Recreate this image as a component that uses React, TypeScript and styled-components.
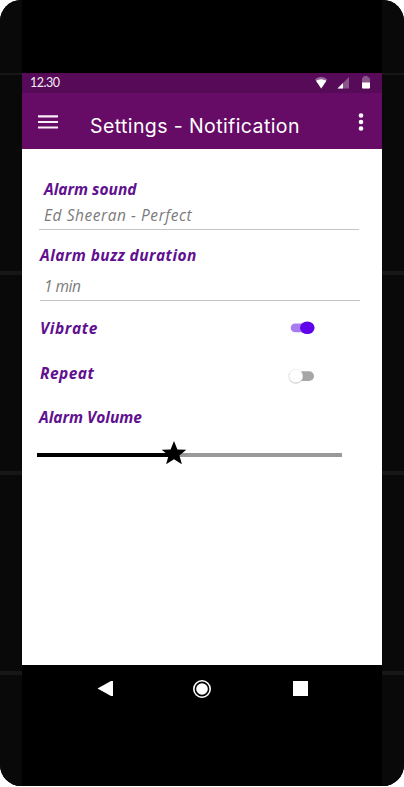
import React from "react";
import styled, { createGlobalStyle } from "styled-components";

const GlobalStyle = createGlobalStyle`
  * { box-sizing: border-box; }
  body { margin: 0; background: #fff; }
`;

const Phone = styled.div`
  display: grid;
  grid-template-columns: 22px 360px 22px;
  width: 404px;
  height: 786px;
  overflow: hidden;
  border-radius: 21px;
  background: #000;
`;

const Bezel = styled.div`
  display: flex;
  flex-direction: column;
  gap: 196px;
  padding-top: 73px;
  background: #090909;
`;

const Seam = styled.div<{ $thin?: boolean }>`
  flex: none;
  height: ${(p) => (p.$thin ? 2 : 4)}px;
  background: #161616;
`;

const Screen = styled.div`
  display: flex;
  flex-direction: column;
  padding-top: 73px;
`;

const StatusBar = styled.header`
  display: flex;
  align-items: center;
  justify-content: space-between;
  height: 20px;
  padding: 0 11px 0 8px;
  background: #560a57;
`;

const Clock = styled.span`
  color: #f4e9f4;
  font: 400 12.5px/20px Lato, sans-serif;
  letter-spacing: -0.5px;
`;

const StatusIcons = styled.div`
  display: flex;
  align-items: center;
`;

const AppBar = styled.div`
  display: flex;
  align-items: flex-start;
  height: 56px;
  background: #660b66;
`;

const IconButton = styled.button<{ $width: number }>`
  display: block;
  width: ${(p) => p.$width}px;
  height: 56px;
  padding: 0;
  border: 0;
  background: none;
  svg { display: block; }
`;

const Title = styled.h1`
  flex: 1;
  margin: 20px 0 0;
  color: #fff;
  font: 400 19.5px/26px Inter, sans-serif;
  letter-spacing: 0.4px;
  white-space: nowrap;
`;

const Content = styled.main`
  height: 516px;
  padding-top: 30px;
  background: #fff;
`;

const Field = styled.section<{ $left: number; $height: number }>`
  width: 320px;
  height: ${(p) => p.$height}px;
  margin-left: ${(p) => p.$left}px;
  border-bottom: 1px solid #c4c4c4;
`;

const Label = styled.div<{ $indent?: number; $spacing?: number }>`
  padding-left: ${(p) => p.$indent ?? 0}px;
  color: #60108f;
  font: italic 700 15.5px/20px "Open Sans", sans-serif;
  letter-spacing: ${(p) => p.$spacing ?? 0}px;
  white-space: nowrap;
`;

const Value = styled.div<{ $top: number; $indent: number; $spacing: number }>`
  margin-top: ${(p) => p.$top}px;
  padding-left: ${(p) => p.$indent}px;
  color: #7b7b7b;
  font: italic 400 15.5px/20px "Open Sans", sans-serif;
  letter-spacing: ${(p) => p.$spacing}px;
  white-space: nowrap;
`;

const Gap = styled.div<{ $size: number }>`
  height: ${(p) => p.$size}px;
`;

const SettingRow = styled.div`
  display: flex;
  align-items: center;
  justify-content: space-between;
  height: 20px;
  padding: 0 66px 0 18px;
`;

const Toggle = styled.svg`
  display: block;
  width: 28px;
  height: 20px;
  overflow: visible;
`;

const Slider = styled.div`
  display: grid;
  grid-template-columns: 137px 168px;
  align-items: center;
  position: relative;
  width: 305px;
  height: 24px;
  margin-left: 15px;
`;

const Track = styled.div<{ $on?: boolean }>`
  height: 4px;
  margin-top: 4px;
  background: ${(p) => (p.$on ? "#000" : "#999")};
`;

const Star = styled.svg`
  position: absolute;
  left: 124px;
  top: 0;
  width: 26px;
  height: 24px;
`;

const NavBar = styled.nav`
  display: flex;
  align-items: flex-start;
  padding: 14px 0 0 75px;
  svg { display: block; }
`;

const NavButton = styled.button<{ $width: number }>`
  width: ${(p) => p.$width}px;
  padding: 0;
  border: 0;
  background: none;
`;

export default function App() {
  return (
    <>
      <GlobalStyle />
      <Phone>
        <Bezel><Seam $thin /><Seam /><Seam /><Seam /></Bezel>
        <Screen>
          <StatusBar>
            <Clock>12.30</Clock>
            <StatusIcons>
              <svg width="58" height="20" viewBox="0 0 58 20">
                <path d="M2 6.3Q8 1.3 14.2 6.3L8.2 15.5Z" fill="#95629a" />
                <path d="M3 7.8Q8 4.8 13.4 7.8L8.2 15.5Z" fill="#fff" />
                <path d="M36 4V15.5H24.5Z" fill="#8b558c" />
                <path d="M30 10V15.5H24.5Z" fill="#fff" />
                <path d="M51 3H53Q55 3 55.2 4.2Q57 4.4 57 6V14.5Q57 15.6 56 15.6H50Q49 15.6 49 14.5V6Q49 4.4 50.4 4.2Q50.6 3 51 3Z" fill="#8b558c" />
                <path d="M49 9.5H57V14.5Q57 15.6 56 15.6H50Q49 15.6 49 14.5Z" fill="#fff" />
              </svg>
            </StatusIcons>
          </StatusBar>
          <AppBar>
            <IconButton $width={68} aria-label="Menu">
              <svg width="68" height="56" viewBox="0 0 68 56" fill="#f7eef7">
                <path d="M16 22.3h20v2.1H16zM16 28h20v2.1H16zM16 33.5h20v2.1H16z" />
              </svg>
            </IconButton>
            <Title>Settings - Notification</Title>
            <IconButton $width={42} aria-label="More options">
              <svg width="42" height="56" viewBox="0 0 42 56" fill="#fff">
                <circle cx="21" cy="22.5" r="2.3" />
                <circle cx="21" cy="29" r="2.3" />
                <circle cx="21" cy="35.5" r="2.3" />
              </svg>
            </IconButton>
          </AppBar>
          <Content>
            <Field $left={17} $height={51}>
              <Label $indent={5}>Alarm sound</Label>
              <Value $top={6} $indent={5} $spacing={0.55}>Ed Sheeran - Perfect</Value>
            </Field>
            <Gap $size={15} />
            <Field $left={18} $height={56}>
              <Label $spacing={0.43}>Alarm buzz duration</Label>
              <Value $top={11} $indent={4} $spacing={-0.5}>1 min</Value>
            </Field>
            <Gap $size={17} />
            <SettingRow>
              <Label $spacing={0.6}>Vibrate</Label>
              <Toggle viewBox="0 0 28 20" role="switch" aria-checked="true">
                <rect x="2.7" y="5.4" width="22" height="8.8" rx="4.4" fill="#a87bf1" />
                <ellipse cx="19.3" cy="9.8" rx="7.3" ry="6.3" fill="#6103ea" />
              </Toggle>
            </SettingRow>
            <Gap $size={25} />
            <SettingRow>
              <Label $spacing={0.45}>Repeat</Label>
              <Toggle viewBox="0 0 28 20" role="switch" aria-checked="false">
                <rect x="5" y="8.2" width="21" height="9.8" rx="4.9" fill="#a6a6a6" />
                <circle cx="7.8" cy="13.5" r="7.3" fill="#d0d0d0" />
                <circle cx="7.8" cy="12.9" r="6.7" fill="#fff" />
              </Toggle>
            </SettingRow>
            <Gap $size={24} />
            <Label $indent={17}>Alarm Volume</Label>
            <Gap $size={14} />
            <Slider>
              <Track $on />
              <Track />
              <Star viewBox="0 0 26 24">
                <path d="M13 0L16.4 8.5L25.3 8.8L18.4 14.4L20.9 23.2L13 18.3L5.1 23.2L7.6 14.4L.7 8.8L9.6 8.5Z" />
              </Star>
            </Slider>
          </Content>
          <NavBar>
            <NavButton $width={95} aria-label="Back">
              <svg width="16" height="20" viewBox="0 0 16 20"><path d="M.5 9.6L14 2H16V17H14Z" fill="#fff" /></svg>
            </NavButton>
            <NavButton $width={101} aria-label="Home">
              <svg width="20" height="20" viewBox="0 0 20 20"><circle cx="10" cy="10" r="8.2" fill="none" stroke="#fff" strokeWidth="1.6" /><circle cx="10" cy="10" r="5.8" fill="#fff" /></svg>
            </NavButton>
            <NavButton $width={15} aria-label="Recent apps">
              <svg width="15" height="20" viewBox="0 0 15 20"><path d="M0 2h15v15H0z" fill="#fff" /></svg>
            </NavButton>
          </NavBar>
        </Screen>
        <Bezel><Seam $thin /><Seam /><Seam /><Seam /></Bezel>
      </Phone>
    </>
  );
}
